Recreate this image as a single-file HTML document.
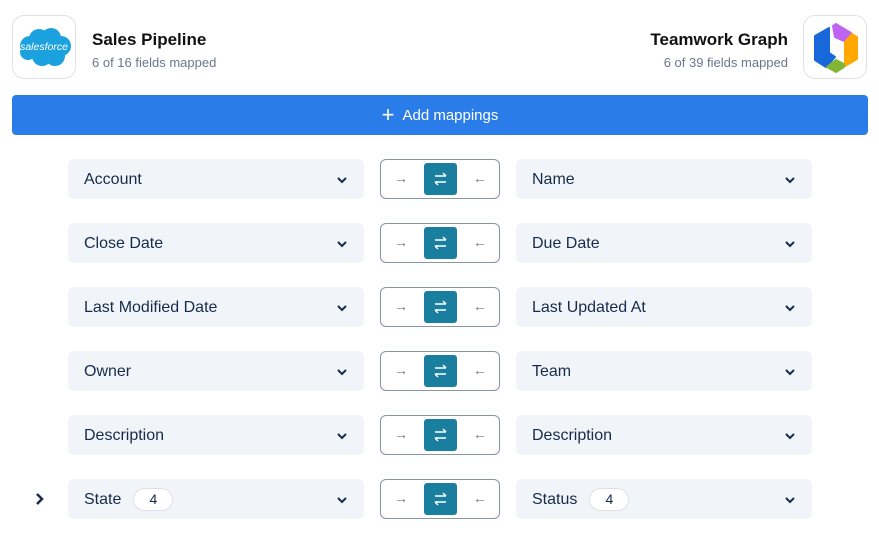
<!DOCTYPE html>
<html><head><style>
*{box-sizing:border-box;margin:0;padding:0}
body{width:879px;height:536px;background:#fff;font-family:"Liberation Sans",sans-serif;position:relative;overflow:hidden;color:#172b4d}
.logo{position:absolute;top:15px;width:64px;height:64px;border:1px solid #dfe1e6;border-radius:12px;background:#fff}
.t{position:absolute;font-size:17px;font-weight:bold;color:#111;top:30px}
.s{position:absolute;font-size:13px;color:#6b778c;top:55px}
.btn{position:absolute;left:12px;top:95px;width:856px;height:40px;background:#2a7de8;border-radius:4px;color:#fff;font-size:15px;display:flex;align-items:center;justify-content:center}
.sel{position:absolute;height:40px;background:#f1f4f8;border-radius:6px;font-size:16px;color:#172b4d;display:flex;align-items:center;padding-left:16px;padding-top:2px}
.sel svg{position:absolute;right:16px;top:17px}
.tg{position:absolute;left:380px;width:120px;height:40px;border:1px solid #8993a4;border-radius:6px}
.tg .a{position:absolute;left:43px;top:3px;width:33px;height:32px;background:#1a7f9e;border-radius:3px}
.tg span{position:absolute;top:10px;font-size:14px;color:#6b778c}
.badge{display:inline-flex;align-items:center;justify-content:center;margin-left:12px;border:1px solid #dfe1e6;background:#fff;border-radius:12px;width:40px;height:23px;font-size:14px;margin-top:-2px}
</style></head><body>
<div class="logo" style="left:12px">
<svg width="62" height="62" viewBox="0 0 62 62"><g fill="#1ba1dd"><circle cx="17" cy="30" r="10"/><circle cx="26" cy="23" r="10"/><circle cx="38" cy="22" r="10"/><circle cx="48" cy="30" r="10"/><circle cx="42" cy="40" r="10"/><circle cx="29" cy="40" r="10"/><circle cx="15" cy="36" r="8"/></g><text x="31" y="34" font-size="10.5" fill="#fff" text-anchor="middle" font-style="italic" font-family="Liberation Sans">salesforce</text></svg>
</div>
<div class="t" style="left:92px">Sales Pipeline</div>
<div class="s" style="left:92px">6 of 16 fields mapped</div>
<div class="t" style="right:91px">Teamwork Graph</div>
<div class="s" style="right:91px">6 of 39 fields mapped</div>
<div class="logo" style="left:803px">
<svg width="62" height="62" viewBox="0 0 62 62" stroke-linejoin="round" stroke-width="2"><path d="M29 10L32 8L47 17L40 25L31 21Z" fill="#bf63f3" stroke="#bf63f3"/><path d="M41 26L48 18L53 21L53 43L41 50Z" fill="#ffa900" stroke="#ffa900"/><path d="M11 20L25 12L25 37L31 41L22 51L11 44Z" fill="#1868db" stroke="#1868db"/><path d="M23 51L32 44L40 48L40 51L32 56Z" fill="#82b536" stroke="#82b536"/></svg>
</div>
<div class="btn"><span style="font-size:22px;margin-right:8px;font-weight:300;line-height:1">+</span>Add mappings</div>
<div id="rows"></div>
<script>
var L=[["Account","Name"],["Close Date","Due Date"],["Last Modified Date","Last Updated At"],["Owner","Team"],["Description","Description"],["State","Status"]];
var chev='<svg width="12" height="8" viewBox="0 0 12 8"><path d="M2 2l4 4 4-4" stroke="#172b4d" stroke-width="2" fill="none"/></svg>';
var h='';
L.forEach(function(r,i){var y=159+i*64;var b=i==5?'<span class="badge">4</span>':'';
h+='<div class="sel" style="left:68px;width:296px;top:'+y+'px">'+r[0]+b+chev+'</div>';
h+='<div class="tg" style="top:'+y+'px"><span style="left:13px">→</span><div class="a"><svg width="33" height="32" viewBox="0 0 33 32"><path d="M11 13h11m-3-3l3 3M22 19H11m3 3l-3-3" stroke="#fff" stroke-width="1.5" fill="none"/></svg></div><span style="left:92px">←</span></div>';
h+='<div class="sel" style="left:516px;width:296px;top:'+y+'px">'+r[1]+b+chev+'</div>';});
h+='<svg style="position:absolute;left:34px;top:492px" width="12" height="14" viewBox="0 0 12 14"><path d="M3 2l5 5-5 5" stroke="#172b4d" stroke-width="2.5" fill="none"/></svg>';
document.getElementById('rows').innerHTML=h;
</script>
</body></html>
